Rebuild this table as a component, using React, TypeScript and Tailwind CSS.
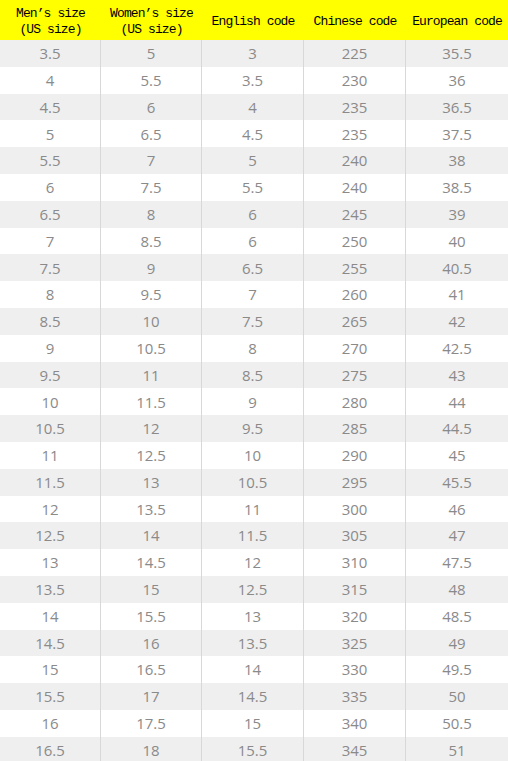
const headers = [
  ["Men’s size", "(US size)"],
  ["Women’s size", "(US size)"],
  ["English code"],
  ["Chinese code"],
  ["European code"],
];

const rows: string[][] = [
  ["3.5", "5", "3", "225", "35.5"],
  ["4", "5.5", "3.5", "230", "36"],
  ["4.5", "6", "4", "235", "36.5"],
  ["5", "6.5", "4.5", "235", "37.5"],
  ["5.5", "7", "5", "240", "38"],
  ["6", "7.5", "5.5", "240", "38.5"],
  ["6.5", "8", "6", "245", "39"],
  ["7", "8.5", "6", "250", "40"],
  ["7.5", "9", "6.5", "255", "40.5"],
  ["8", "9.5", "7", "260", "41"],
  ["8.5", "10", "7.5", "265", "42"],
  ["9", "10.5", "8", "270", "42.5"],
  ["9.5", "11", "8.5", "275", "43"],
  ["10", "11.5", "9", "280", "44"],
  ["10.5", "12", "9.5", "285", "44.5"],
  ["11", "12.5", "10", "290", "45"],
  ["11.5", "13", "10.5", "295", "45.5"],
  ["12", "13.5", "11", "300", "46"],
  ["12.5", "14", "11.5", "305", "47"],
  ["13", "14.5", "12", "310", "47.5"],
  ["13.5", "15", "12.5", "315", "48"],
  ["14", "15.5", "13", "320", "48.5"],
  ["14.5", "16", "13.5", "325", "49"],
  ["15", "16.5", "14", "330", "49.5"],
  ["15.5", "17", "14.5", "335", "50"],
  ["16", "17.5", "15", "340", "50.5"],
  ["16.5", "18", "15.5", "345", "51"],
];

export default function App() {
  return (
    <div className="h-[761px] w-[508px] overflow-hidden bg-white">
      <div className="grid h-10 grid-cols-[101px_101px_102px_102px_102px] bg-[#ffff00] pt-[4px] font-mono text-[13px] leading-[16px] tracking-[-0.9px] text-black">
        {headers.map((h, i) => (
          <div key={i} className="flex flex-col items-center justify-center text-center">
            {h.map((line) => (
              <span key={line}>{line}</span>
            ))}
          </div>
        ))}
      </div>
      {rows.map((r, i) => (
        <div
          key={i}
          className={`grid h-[26.8px] grid-cols-[101px_101px_102px_102px_102px] font-[Open_Sans] text-[15px] text-[#8a8a8a] ${
            i % 2 === 0 ? "bg-[#efefef]" : "bg-white"
          }`}
        >
          {r.map((c, j) => (
            <div
              key={j}
              className={`flex items-center justify-center ${j < 4 ? "border-r border-[#d8d8d8]" : ""}`}
            >
              {c}
            </div>
          ))}
        </div>
      ))}
    </div>
  );
}
